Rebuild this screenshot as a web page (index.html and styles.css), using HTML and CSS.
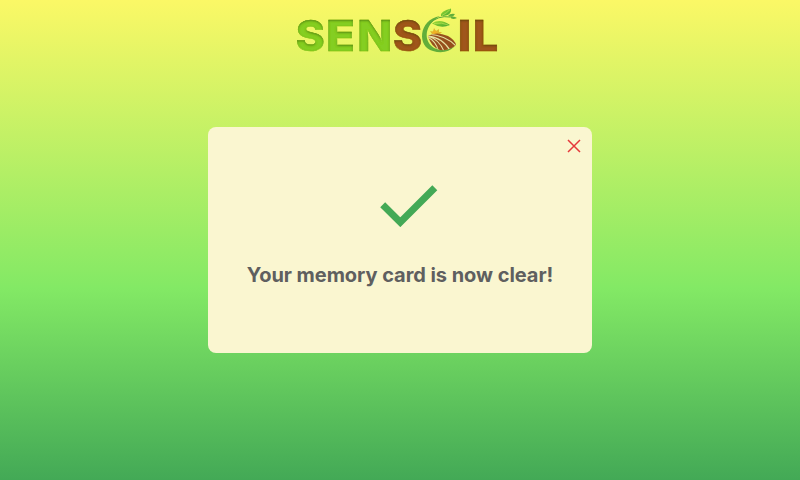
FILE: index.html
```html
<!DOCTYPE html>
<html lang="en">
<head>
<meta charset="utf-8">
<title>Sensoil</title>
<link rel="stylesheet" href="styles.css">
</head>
<body>
<main class="screen">
  <header class="brand">
    <svg class="logo" viewBox="290 0 214 68" role="img" aria-label="Sensoil">
      <defs>
        <filter id="inset" x="-5%" y="-5%" width="110%" height="115%">
          <feOffset in="SourceAlpha" dx="0.2" dy="0.7" result="off"/>
          <feGaussianBlur in="off" stdDeviation="1.1" result="blur"/>
          <feComposite in="SourceAlpha" in2="blur" operator="out" result="edge"/>
          <feFlood flood-color="#263c08" flood-opacity="0.75"/>
          <feComposite in2="edge" operator="in" result="shade"/>
          <feMerge><feMergeNode in="SourceGraphic"/><feMergeNode in="shade"/></feMerge>
        </filter>
        <linearGradient id="leaf" x1="0" y1="0" x2="1" y2="1">
          <stop offset="0" stop-color="#a5df30"/><stop offset="1" stop-color="#3fa332"/>
        </linearGradient>
        <clipPath id="field"><path d="M428 36Q436 31 448 36Q455 40 456 45Q450 51 440 50Q431 47 428 36Z"/></clipPath>
      </defs>
      <g class="wordmark" filter="url(#inset)">
        <text class="green" x="295.7" y="51" textLength="29" lengthAdjust="spacingAndGlyphs">S</text>
        <text class="green" x="326" y="51" textLength="29" lengthAdjust="spacingAndGlyphs">E</text>
        <text class="green" x="357.2" y="51" textLength="35" lengthAdjust="spacingAndGlyphs">N</text>
        <text class="brown" x="393" y="51" textLength="29" lengthAdjust="spacingAndGlyphs">S</text>
        <text class="brown" x="457.5" y="51" textLength="14" lengthAdjust="spacingAndGlyphs">I</text>
        <text class="brown" x="472.7" y="51" textLength="25.5" lengthAdjust="spacingAndGlyphs">L</text>
      </g>
      <path d="M440 16C418 20 417 47 433 51Q446 55 455 46Q444 53 434 48C423 41 424 25 440 16Z" fill="#62ae3a"/>
      <path d="M429 36L432 34L430 31L433 31.500L434 28L436 31L439 29L439 32L442 32L439 35Z" fill="#dfb52c"/>
      <circle cx="435" cy="33" r="2.6" fill="#efb226"/>
      <g clip-path="url(#field)">
        <path d="M427 30H458V53H427Z" fill="#96501d"/>
        <path d="M427 34Q446 35 457 47M427 36Q443 37 451 52M427 36Q440 39 445 54M427 37Q437 41 439 54" fill="none" stroke="#e5dfa0" stroke-width="1.1"/>
      </g>
      <path d="M432 23.500Q440 18 450 25Q441 29 432 23.500Z" fill="url(#leaf)"/>
      <path d="M441 16Q440 11 451 8.500Q452 16 441 16Z" fill="url(#leaf)"/>
      <path d="M429 24Q438 15 450 17" fill="none" stroke="#55a936" stroke-width="1"/>
      <path d="M448 16Q450 13 455 14Q453 18 448 16ZM450 17Q454 15.500 457 18Q452 20.500 450 17Z" fill="#62ae3a"/>
      <path d="M434 23.500Q442 22 448 25M442 15.500Q447 13 450 9.500" fill="none" stroke="#c6e75c" stroke-width=".6"/>
    </svg>
  </header>
  <section class="dialog" role="dialog" aria-labelledby="message">
    <button class="close" aria-label="Close">
      <svg viewBox="0 0 14 14"><path d="M1 1L13 13M13 1L1 13"/></svg>
    </button>
    <svg class="check" viewBox="0 0 58 42"><path d="M2.700 19.700L20.300 37.200L54.800 2.700"/></svg>
    <p class="message" id="message">Your memory card is now clear!</p>
  </section>
</main>
</body>
</html>
```
FILE: styles.css
```css
* { box-sizing: border-box; }
body { margin: 0; }
.screen {
  width: 800px;
  height: 480px;
  display: flex;
  flex-direction: column;
  align-items: center;
  background: linear-gradient(#fbf866 0%, #83e965 60%, #43a956 100%);
  font-family: Inter, "Liberation Sans", sans-serif;
}
.brand { display: flex; padding: 0 0 58.5px; margin-right: 6px; }
.logo { width: 214px; height: 68px; overflow: visible; }
.wordmark {
  font-family: Inter, sans-serif;
  font-weight: 800;
  font-size: 43px;
  stroke-width: 0.5px;
}
.green { fill: #84ce23; stroke: #84ce23; }
.brown { fill: #9f571a; stroke: #9f571a; }
.dialog {
  width: 384.500px;
  height: 226.500px;
  display: flex;
  flex-direction: column;
  align-items: center;
  border-radius: 8px;
  background: #faf6d0;
}
.close {
  align-self: flex-end;
  display: flex;
  margin: 12px 11.500px 0 0;
  padding: 0;
  border: 0;
  background: none;
}
.close svg { width: 14px; height: 14px; }
.close path { fill: none; stroke: #e5383b; stroke-width: 1.5; }
.check { width: 58px; height: 42px; margin: 32.500px 0 0 18px; }
.check path { fill: none; stroke: #43a956; stroke-width: 7; }
.message {
  margin: 36px 0 0;
  font-size: 20px;
  line-height: 24px;
  letter-spacing: -0.05px;
  font-weight: 700;
  color: #5f5f5f;
  white-space: nowrap;
}
```
